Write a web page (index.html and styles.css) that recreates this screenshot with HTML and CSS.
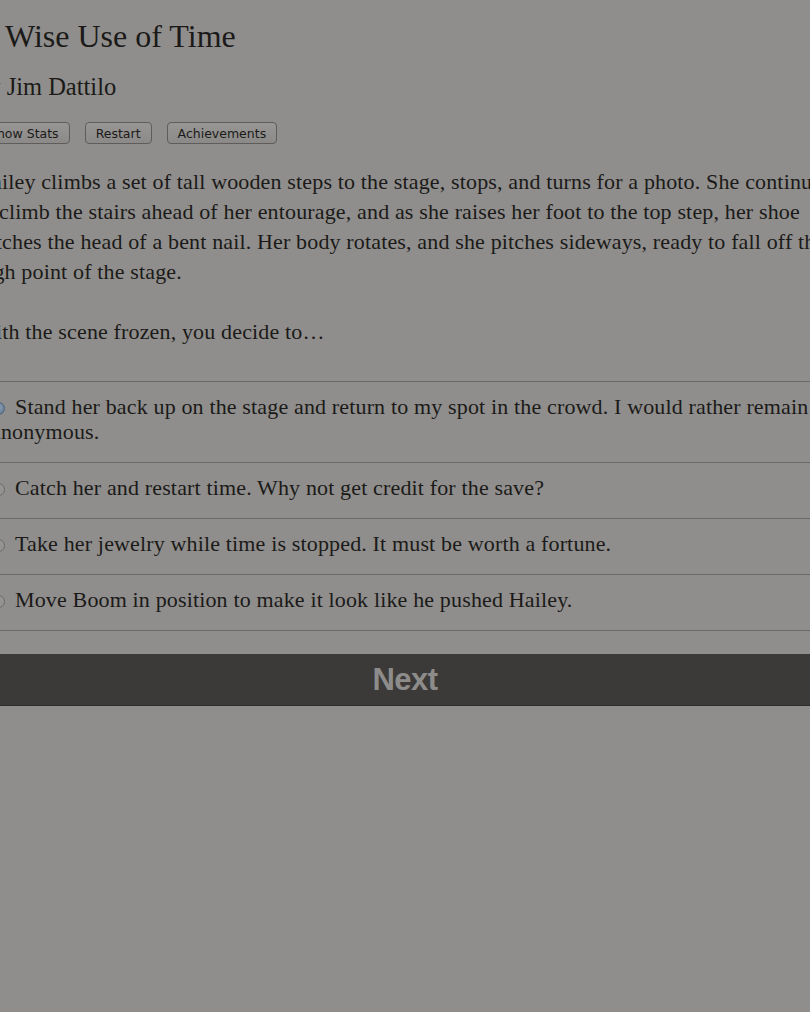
FILE: index.html
```html
<!DOCTYPE html>
<html>
<head>
<meta charset="utf-8">
<link rel="stylesheet" href="styles.css">
</head>
<body>
<div class="page">
  <header class="header">
    <h1 class="title">Wise Use of Time</h1>
    <h2 class="author">by Jim Dattilo</h2>
    <div class="toolbar">
      <button class="tbtn">Show Stats</button>
      <button class="tbtn">Restart</button>
      <button class="tbtn">Achievements</button>
    </div>
  </header>
  <main class="text">
    <p class="para">Hailey climbs a set of tall wooden steps to the stage, stops, and turns for a photo. She continues to climb the stairs ahead of her entourage, and as she raises her foot to the top step, her shoe catches the head of a bent nail. Her body rotates, and she pitches sideways, ready to fall off the high point of the stage.</p>
    <p class="para">With the scene frozen, you decide to…</p>
    <form class="choices">
      <label class="choice"><span class="radio radio-on"></span>Stand her back up on the stage and return to my spot in the crowd. I would rather remain anonymous.</label>
      <label class="choice"><span class="radio"></span>Catch her and restart time. Why not get credit for the save?</label>
      <label class="choice"><span class="radio"></span>Take her jewelry while time is stopped. It must be worth a fortune.</label>
      <label class="choice"><span class="radio"></span>Move Boom in position to make it look like he pushed Hailey.</label>
    </form>
    <div class="next">Next</div>
  </main>
</div>
</body>
</html>
```
FILE: styles.css
```css
html, body {
  margin: 0;
  padding: 0;
  background: #8f8e8c;
  overflow: hidden;
}
.page {
  margin-left: -24px;
  width: 866px;
  color: #1b1a18;
  font-family: "Liberation Serif", "Times New Roman", serif;
}
.header {
  padding-top: 16px;
}
.title {
  margin: 0 0 0 29px;
  font-size: 32px;
  font-weight: normal;
  line-height: 40px;
}
.author {
  margin: 16px 0 0 0;
  font-size: 24.5px;
  font-weight: normal;
  line-height: 30px;
}
.toolbar {
  display: flex;
  gap: 15px;
  margin-top: 20px;
  margin-left: 2px;
}
.tbtn {
  height: 22px;
  padding: 0 10px;
  font-family: "DejaVu Sans", "Liberation Sans", sans-serif;
  font-size: 12.5px;
  color: #1b1a18;
  background: linear-gradient(#979694, #8b8a88);
  border: 1px solid #5e5d5b;
  border-radius: 4px;
}
.text {
  margin-top: 23px;
  font-size: 22px;
  letter-spacing: 0.15px;
  line-height: 30px;
}
.para {
  margin: 0 0 30px 0;
}
.choices {
  margin-top: 34px;
  border-top: 1px solid #6a6967;
}
.choice {
  display: block;
  padding: 12px 0 18px 15px;
  line-height: 25px;
  border-bottom: 1px solid #6a6967;
}
.radio {
  display: inline-block;
  vertical-align: -1px;
  width: 11px;
  height: 11px;
  margin: 0 10px 0 1px;
  border: 1px solid #6d6c6a;
  border-radius: 50%;
  background: #949391;
}
.radio-on {
  background: radial-gradient(circle at 50% 40%, #8ea3b8, #56708c);
  border-color: #4d6279;
}
.next {
  margin-top: 23px;
  height: 51px;
  background: #3b3a38;
  border-bottom: 1px solid #2e2d2b;
  color: #8d8c8a;
  font-family: "Liberation Sans", Arial, sans-serif;
  font-weight: bold;
  font-size: 31px;
  letter-spacing: -0.5px;
  line-height: 51px;
  text-align: center;
  padding-left: 24px;
  width: 810px;
}
```
